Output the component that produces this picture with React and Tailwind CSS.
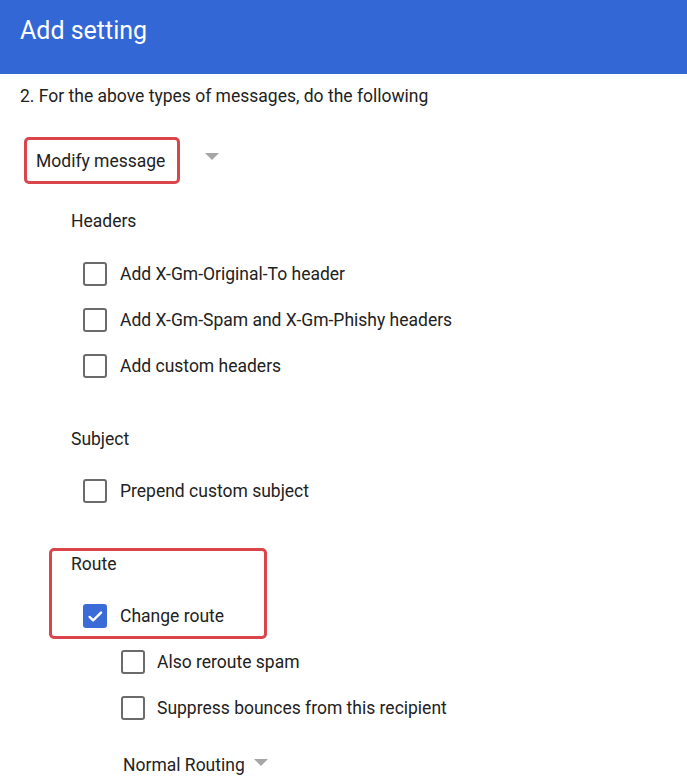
import React from "react";

const Box = ({ checked }) =>
  checked ? (
    <div className="w-[24px] h-[24px] rounded-[3px] bg-[#3a6bd6] flex items-center justify-center shrink-0">
      <svg width="19" height="19" viewBox="0 0 24 24" fill="none" stroke="white" strokeWidth="3" strokeLinecap="round" strokeLinejoin="round">
        <path d="M4.5 12.5l4.5 4.5 10-10" />
      </svg>
    </div>
  ) : (
    <div className="w-[24px] h-[24px] rounded-[3px] border-2 border-[#6b6b6b] bg-white shrink-0" />
  );

const Row = ({ label, checked, gap = "ml-[13px]" }) => (
  <div className="flex items-center h-[46px]">
    <Box checked={checked} />
    <span className={gap}>{label}</span>
  </div>
);

const Caret = () => (
  <div className="w-0 h-0 border-l-[7px] border-r-[7px] border-t-[7px] border-l-transparent border-r-transparent border-t-[#a6a6a6]" />
);

export default function App() {
  return (
    <div className="w-[687px] h-[781px] bg-white overflow-hidden text-[17.5px] leading-[24px] text-[#222]" style={{ fontFamily: "Roboto, 'Liberation Sans', sans-serif" }}>
      <div className="h-[74px] bg-[#3367d6] px-[20px] pt-[16px]">
        <h1 className="text-white text-[25px] leading-[30px]">Add setting</h1>
      </div>

      <p className="mt-[10px] ml-[20px]">2. For the above types of messages, do the following</p>

      <div className="mt-[29px] ml-[24px] flex items-center">
        <div className="w-[156px] h-[47px] border-[3px] border-[#d9454b] rounded-[5px] flex items-center pl-[9px]">
          Modify message
        </div>
        <div className="ml-[25px] -mt-[8px]">
          <Caret />
        </div>
      </div>

      <p className="mt-[25px] ml-[71px]">Headers</p>
      <div className="mt-[18px] ml-[83px]">
        <Row label="Add X-Gm-Original-To header" />
        <Row label="Add X-Gm-Spam and X-Gm-Phishy headers" />
        <Row label="Add custom headers" />
      </div>

      <p className="mt-[38px] ml-[71px]">Subject</p>
      <div className="mt-[17px] ml-[83px]">
        <Row label="Prepend custom subject" />
      </div>

      <div className="mt-[34px] ml-[49px] w-[218px] border-[3px] border-[#d9454b] rounded-[5px] pt-[1px]">
        <p className="ml-[19px]">Route</p>
        <div className="mt-[20px] ml-[31px]">
          <div className="flex items-center h-[40px]">
            <Box checked />
            <span className="ml-[13px]">Change route</span>
          </div>
        </div>
      </div>

      <div className="ml-[121px]">
        <Row label="Also reroute spam" gap="ml-[12px]" />
        <Row label="Suppress bounces from this recipient" gap="ml-[12px]" />
      </div>

      <div className="mt-[22px] ml-[123px] flex items-center">
        <span>Normal Routing</span>
        <div className="ml-[9px] -mt-[6px]">
          <Caret />
        </div>
      </div>
    </div>
  );
}
